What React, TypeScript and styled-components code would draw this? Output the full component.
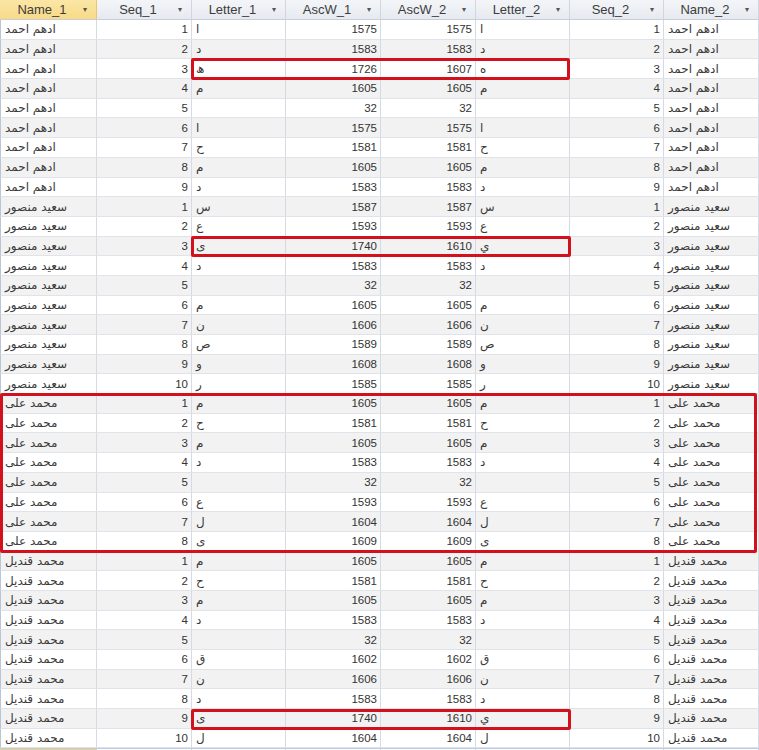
import React from "react";
import styled, { createGlobalStyle } from "styled-components";

const GlobalStyle = createGlobalStyle`
  html, body { margin: 0; padding: 0; background: #ffffff; overflow: hidden; }
  #root { width: 759px; }
`;

const HEADER_H = 20;
const ROW_H = 19.7;
const COLS = "97px 95px 94px 95px 95px 94px 94px 95px";

type Row = { name1: string; name2: string; seq: number; l1: string; l2: string; a1: number; a2: number };

const groups: { n1: string; n2: string; letters: [string, string][] }[] = [
  {
    n1: "ادهم احمد",
    n2: "ادهم احمد",
    letters: [["ا", "ا"], ["د", "د"], ["\u06BE", "\u0647"], ["م", "م"], [" ", " "], ["ا", "ا"], ["ح", "ح"], ["م", "م"], ["د", "د"]],
  },
  {
    n1: "سع\u06CCد منصور",
    n2: "سعيد منصور",
    letters: [["س", "س"], ["ع", "ع"], ["\u06CC", "\u064A"], ["د", "د"], [" ", " "], ["م", "م"], ["ن", "ن"], ["ص", "ص"], ["و", "و"], ["ر", "ر"]],
  },
  {
    n1: "محمد على",
    n2: "محمد على",
    letters: [["م", "م"], ["ح", "ح"], ["م", "م"], ["د", "د"], [" ", " "], ["ع", "ع"], ["ل", "ل"], ["ى", "ى"]],
  },
  {
    n1: "محمد قند\u06CCل",
    n2: "محمد قنديل",
    letters: [["م", "م"], ["ح", "ح"], ["م", "م"], ["د", "د"], [" ", " "], ["ق", "ق"], ["ن", "ن"], ["د", "د"], ["\u06CC", "\u064A"], ["ل", "ل"]],
  },
];

const rows: Row[] = [];
groups.forEach((g) => {
  g.letters.forEach(([a, b], i) => {
    rows.push({
      name1: g.n1,
      name2: g.n2,
      seq: i + 1,
      l1: a,
      l2: b,
      a1: a.codePointAt(0) || 0,
      a2: b.codePointAt(0) || 0,
    });
  });
});

const headers = ["Name_1", "Seq_1", "Letter_1", "AscW_1", "AscW_2", "Letter_2", "Seq_2", "Name_2"];

const Sheet = styled.div`
  position: relative;
  width: 759px;
  height: 750px;
  overflow: hidden;
  font-family: "Liberation Sans", "DejaVu Sans", Arial, sans-serif;
  color: #333333;
`;

const HeaderRow = styled.div`
  display: grid;
  grid-template-columns: ${COLS};
  height: ${HEADER_H}px;
  box-sizing: border-box;
  border-bottom: 1px solid #c9cfd9;
`;

const HeaderCell = styled.div<{ $active?: boolean }>`
  display: flex;
  align-items: center;
  box-sizing: border-box;
  border-right: 1px solid ${(p) => (p.$active ? "#e8c96a" : "#d2d7df")};
  background: ${(p) =>
    p.$active
      ? "linear-gradient(#fbe6a6, #f8da88)"
      : "linear-gradient(#f3f5f8, #e6eaf0)"};
  font-size: 13px;
  color: #3c3c3c;
  padding: 0 7px 0 3px;
`;

const HeaderLabel = styled.span`
  flex: 1;
  text-align: center;
  white-space: nowrap;
`;

const Arrow = styled.span`
  font-size: 8px;
  color: #555;
  width: 8px;
  text-align: center;
`;

const DataRow = styled.div<{ $alt?: boolean }>`
  display: grid;
  grid-template-columns: ${COLS};
  height: ${ROW_H}px;
  background: ${(p) => (p.$alt ? "#f2f2f2" : "#ffffff")};
`;

const Cell = styled.div<{ $align?: "left" | "right"; $edge?: boolean }>`
  box-sizing: border-box;
  border-right: 1px solid #d6dbe3;
  border-bottom: 1px solid #e0e4ea;
  ${(p) => (p.$edge ? "border-left: 1px solid #b9c6d8;" : "")}
  display: flex;
  align-items: center;
  justify-content: ${(p) => (p.$align === "right" ? "flex-end" : "flex-start")};
  padding: ${(p) => (p.$align === "right" ? "0 3px 0 0" : "0 0 0 4px")};
  font-size: 11.5px;
  white-space: nowrap;
  overflow: hidden;
`;

const ArabicText = styled.span`
  font-family: "DejaVu Sans", "Noto Sans", sans-serif;
  font-size: 12px;
  color: #3a3a3a;
  direction: rtl;
  unicode-bidi: isolate;
`;

const NewRow = styled.div`
  display: grid;
  grid-template-columns: ${COLS};
  height: 20px;
  border-top: 1px solid #b9cbe3;
`;

const NewCell = styled.div<{ $active?: boolean }>`
  box-sizing: border-box;
  border-right: 1px solid #d6dbe3;
  ${(p) => (p.$active ? "border: 1px solid #f0d27a; background: #fffbea;" : "")}
`;

const Highlight = styled.div`
  position: absolute;
  box-sizing: border-box;
  border: 3px solid #d2111d;
  border-radius: 2px;
  pointer-events: none;
`;

const boxes = [
  { row: 2, count: 1, left: 191, right: 570 },
  { row: 11, count: 1, left: 191, right: 571 },
  { row: 19, count: 8, left: 0, right: 757 },
  { row: 35, count: 1, left: 191, right: 571 },
];

export default function App() {
  return (
    <>
      <GlobalStyle />
      <Sheet>
        <HeaderRow>
          {headers.map((h, i) => (
            <HeaderCell key={h} $active={i === 0}>
              <HeaderLabel>{h}</HeaderLabel>
              <Arrow>▾</Arrow>
            </HeaderCell>
          ))}
        </HeaderRow>
        {rows.map((r, i) => (
          <DataRow key={i} $alt={i % 2 === 1}>
            <Cell $edge>
              <ArabicText>{r.name1}</ArabicText>
            </Cell>
            <Cell $align="right">{r.seq}</Cell>
            <Cell>
              <ArabicText>{r.l1}</ArabicText>
            </Cell>
            <Cell $align="right">{r.a1}</Cell>
            <Cell $align="right">{r.a2}</Cell>
            <Cell>
              <ArabicText>{r.l2}</ArabicText>
            </Cell>
            <Cell $align="right">{r.seq}</Cell>
            <Cell>
              <ArabicText>{r.name2}</ArabicText>
            </Cell>
          </DataRow>
        ))}
        <NewRow>
          {headers.map((h, i) => (
            <NewCell key={h} $active={i === 0} />
          ))}
        </NewRow>
        {boxes.map((b, i) => (
          <Highlight
            key={i}
            style={{
              top: HEADER_H + b.row * ROW_H - 1,
              left: b.left,
              width: b.right - b.left,
              height: b.count * ROW_H + 2,
            }}
          />
        ))}
      </Sheet>
    </>
  );
}
